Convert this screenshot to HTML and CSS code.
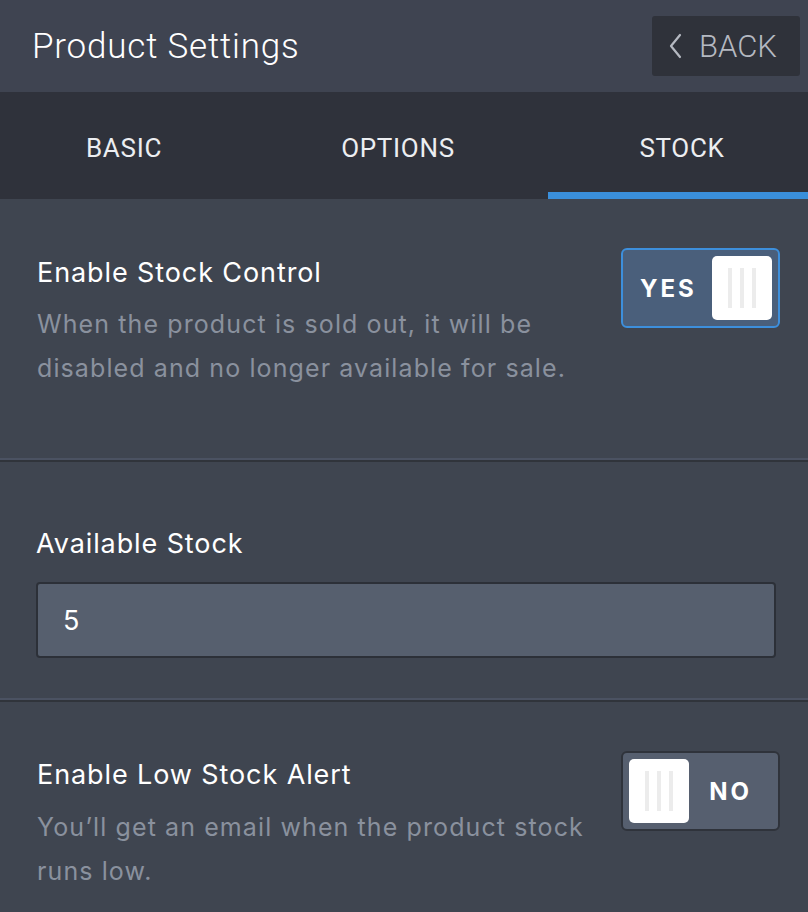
FILE: index.html
```html
<!DOCTYPE html>
<html>
<head>
<meta charset="utf-8">
<link rel="stylesheet" href="styles.css">
</head>
<body>
<div class="app">
  <header class="topbar">
    <h1 class="title">Product Settings</h1>
    <button class="back">
      <svg class="chev" width="14" height="26" viewBox="0 0 14 26"><path d="M12 2 L3 13 L12 24" fill="none" stroke="#b5b9c1" stroke-width="2.2" stroke-linecap="round" stroke-linejoin="round"/></svg>
      <span>BACK</span>
    </button>
  </header>
  <nav class="tabs">
    <div class="tab t1">BASIC</div>
    <div class="tab t2">OPTIONS</div>
    <div class="tab t3 active">STOCK</div>
  </nav>
  <main class="content">
    <section class="section s1">
      <div class="row">
        <div class="text">
          <div class="label">Enable Stock Control</div>
          <div class="desc">When the product is sold out, it will be disabled and no longer available for sale.</div>
        </div>
        <div class="toggle on">
          <span class="tlabel">YES</span>
          <span class="knob"><i></i><i></i><i></i></span>
        </div>
      </div>
    </section>
    <section class="section s2">
      <div class="label">Available Stock</div>
      <div class="input">5</div>
    </section>
    <section class="section s3">
      <div class="row">
        <div class="text">
          <div class="label">Enable Low Stock Alert</div>
          <div class="desc">You’ll get an email when the product stock runs low.</div>
        </div>
        <div class="toggle off">
          <span class="knob"><i></i><i></i><i></i></span>
          <span class="tlabel">NO</span>
        </div>
      </div>
    </section>
  </main>
</div>
</body>
</html>
```
FILE: styles.css
```css
* { box-sizing: border-box; }
html, body { margin: 0; padding: 0; }
body { background: #3f4550; width: 808px; height: 912px; overflow: hidden; font-family: Inter, "Noto Sans", sans-serif; }
.app { width: 808px; }
.topbar {
  height: 92px; background: #3f4451;
  display: flex; align-items: center; justify-content: space-between;
  padding: 0 8px 0 32px;
}
.title { margin: 0; font-family: Roboto, sans-serif; font-weight: 300; font-size: 35px; color: #ffffff; letter-spacing: 0.8px; }
.back {
  width: 148px; height: 60px; background: #2f323a; border: none; border-radius: 3px;
  display: flex; align-items: center; justify-content: flex-start; gap: 17px;
  font-family: Roboto, sans-serif; font-weight: 300; font-size: 31px; color: #b5b9c1;
  padding: 0 0 0 16px;
}
.chev { flex: none; }
.tabs { height: 107px; background: #2f323b; display: flex; }
.tab {
  display: flex; align-items: center; justify-content: center;
  font-family: Roboto, sans-serif; font-size: 26px; color: #eceef1; letter-spacing: 0.7px;
  border-bottom: 7px solid transparent; padding-top: 12px;
}
.t1 { flex: 0 0 248px; }
.t2 { flex: 0 0 300px; }
.t3 { flex: 1 1 auto; padding-left: 8px; }
.tab.active { border-bottom-color: #3a8fdb; }
.section { border-bottom: 2px solid #30343b; position: relative; }
.section::after { content: ""; position: absolute; left: 0; right: 0; bottom: 0; height: 2px; background: #4b5262; }
.s1 { height: 263px; padding: 49px 28px 0 37px; }
.s2 { height: 240px; padding: 64px 32px 0 36px; }
.s3 { padding: 49px 28px 0 37px; height: 210px; border-bottom: none; }
.s3::after { display: none; }
.row { display: flex; justify-content: space-between; align-items: flex-start; }
.text { padding-top: 7px; }
.s3 .text { padding-top: 6px; }
.label { font-size: 27px; color: #ffffff; line-height: 36px; letter-spacing: 0.9px; }
.desc { font-size: 25px; color: #8a919e; line-height: 44px; margin-top: 11px; width: 565px; letter-spacing: 1.1px; }
.s3 .desc { margin-top: 12px; }
.toggle {
  width: 159px; height: 80px; border-radius: 6px; border: 2px solid;
  display: flex; align-items: center; justify-content: space-between; padding: 0 6px;
  flex: none;
}
.toggle.on { background: #4a5f7b; border-color: #3d8fdc; padding-left: 17px; }
.toggle.off { background: #565f6f; border-color: #2f333b; padding-right: 26px; }
.tlabel { font-size: 24px; font-weight: 700; color: #ffffff; letter-spacing: 3px; }
.knob {
  width: 60px; height: 64px; background: #ffffff; border-radius: 5px;
  display: flex; justify-content: center; align-items: center; gap: 8px;
}
.knob i { display: block; width: 4px; height: 40px; background: #ececec; }
.s2 .label { margin-bottom: 20px; }
.input {
  height: 76px; background: #565f6e; border: 2px solid #2c3038; border-radius: 4px;
  font-size: 27px; color: #ffffff; display: flex; align-items: center; padding-left: 25px;
}
```
